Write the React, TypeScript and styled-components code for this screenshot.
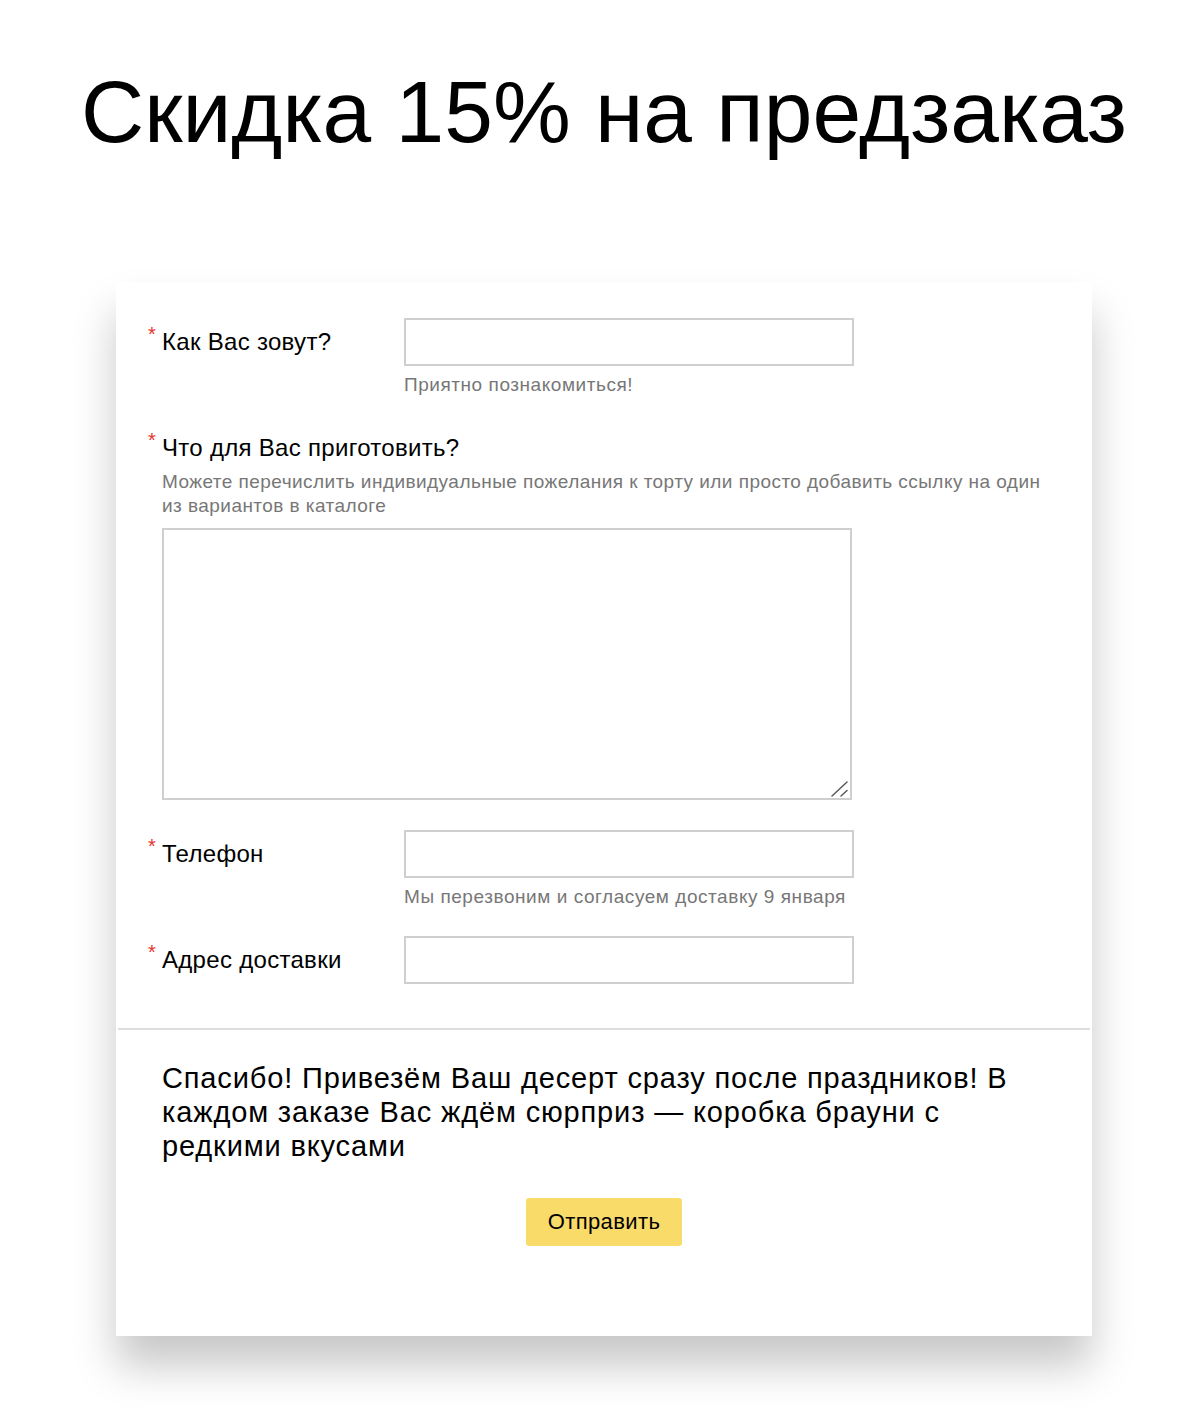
import styled, { createGlobalStyle } from 'styled-components';

const GlobalStyle = createGlobalStyle`
  body {
    margin: 0;
    background: #ffffff;
    font-family: 'Liberation Sans', Arial, sans-serif;
    color: #000000;
  }
`;

type FieldData = {
  label: string;
  hint?: string;
};

const inlineFieldsTop: FieldData[] = [
  { label: 'Как Вас зовут?', hint: 'Приятно познакомиться!' },
];

const inlineFieldsBottom: FieldData[] = [
  { label: 'Телефон', hint: 'Мы перезвоним и согласуем доставку 9 января' },
  { label: 'Адрес доставки' },
];

function InlineField({ label, hint }: FieldData) {
  return (
    <Row>
      <Label>
        <Star>*</Star>
        {label}
      </Label>
      <Control>
        <TextInput type="text" />
        {hint && <Hint>{hint}</Hint>}
      </Control>
    </Row>
  );
}

function App() {
  return (
    <Page>
      <GlobalStyle />
      <Title>Скидка 15% на предзаказ</Title>
      <Card>
        <Fields>
          {inlineFieldsTop.map((f) => (
            <InlineField key={f.label} {...f} />
          ))}
          <Block>
            <Label>
              <Star>*</Star>
              Что для Вас приготовить?
            </Label>
            <Description>
              Можете перечислить индивидуальные пожелания к торту или просто
              добавить ссылку на один из вариантов в каталоге
            </Description>
            <AreaWrap>
              <TextArea />
              <Resizer width="18" height="16" viewBox="0 0 18 16">
                <line x1="1" y1="15" x2="16" y2="1" />
                <line x1="10" y1="15" x2="16" y2="9.5" />
              </Resizer>
            </AreaWrap>
          </Block>
          {inlineFieldsBottom.map((f) => (
            <InlineField key={f.label} {...f} />
          ))}
        </Fields>
        <Divider />
        <Footer>
          <Thanks>
            Спасибо! Привезём Ваш десерт сразу после праздников! В каждом
            заказе Вас ждём сюрприз — коробка брауни с редкими вкусами
          </Thanks>
          <SubmitButton type="button">Отправить</SubmitButton>
        </Footer>
      </Card>
    </Page>
  );
}

export default App;

const Page = styled.div`
  width: 1202px;
  min-height: 1412px;
  box-sizing: border-box;
  padding: 62px 0 0 6px;
  display: flex;
  flex-direction: column;
  align-items: center;
`;

const Title = styled.h1`
  margin: 0 0 119px;
  font-size: 87.5px;
  line-height: 101px;
  font-weight: 400;
  white-space: nowrap;
`;

const Card = styled.div`
  width: 976px;
  background: #ffffff;
  box-shadow: 0 30px 40px rgba(0, 0, 0, 0.22);
  padding: 36px 0 90px;
  box-sizing: border-box;
  display: flex;
  flex-direction: column;
`;

const Fields = styled.div`
  padding: 0 36px 0 46px;
  display: flex;
  flex-direction: column;
  gap: 27px;
`;

const Row = styled.div`
  display: grid;
  grid-template-columns: 242px 450px;
  align-items: start;
`;

const Label = styled.div`
  font-size: 24px;
  letter-spacing: 0.3px;
  line-height: 48px;
  color: #000000;
  white-space: nowrap;
`;

const Star = styled.span`
  display: inline-block;
  width: 14px;
  margin-left: -14px;
  color: #e8332a;
  font-size: 20px;
  letter-spacing: 0;
  vertical-align: top;
  line-height: 32px;
`;

const Control = styled.div`
  display: flex;
  flex-direction: column;
`;

const TextInput = styled.input`
  width: 450px;
  height: 48px;
  box-sizing: border-box;
  border: 2px solid #cfcfcf;
  border-radius: 0;
  padding: 0 12px;
  font-family: inherit;
  font-size: 20px;
  outline: none;
  background: #ffffff;
`;

const Hint = styled.div`
  margin-top: 7px;
  font-size: 19px;
  letter-spacing: 0.55px;
  line-height: 24px;
  color: #777777;
  white-space: nowrap;
`;

const Block = styled.div`
  display: flex;
  flex-direction: column;
  margin-bottom: 3px;
`;

const Description = styled.div`
  margin-top: -2px;
  font-size: 19px;
  letter-spacing: 0.45px;
  line-height: 24px;
  color: #777777;
`;

const AreaWrap = styled.div`
  position: relative;
  margin-top: 10px;
  width: 690px;
  height: 272px;
`;

const TextArea = styled.textarea`
  display: block;
  width: 100%;
  height: 100%;
  box-sizing: border-box;
  border: 2px solid #cfcfcf;
  border-radius: 0;
  padding: 10px 12px;
  font-family: inherit;
  font-size: 20px;
  outline: none;
  resize: none;
`;

const Resizer = styled.svg`
  position: absolute;
  right: 3px;
  bottom: 3px;
  pointer-events: none;

  line {
    stroke: #5a5a5a;
    stroke-width: 1.5;
    stroke-linecap: round;
  }
`;

const Divider = styled.hr`
  margin: 44px 2px 0;
  border: none;
  height: 2px;
  background: #dddddd;
`;

const Footer = styled.div`
  padding: 31px 46px 0;
  display: flex;
  flex-direction: column;
  align-items: center;
`;

const Thanks = styled.p`
  margin: 0;
  align-self: stretch;
  font-size: 29px;
  letter-spacing: 0.85px;
  line-height: 34px;
  color: #000000;
`;

const SubmitButton = styled.button`
  margin-top: 35px;
  width: 156px;
  height: 48px;
  border: none;
  border-radius: 3px;
  background: #f9db6a;
  font-family: inherit;
  font-size: 22px;
  letter-spacing: 0.4px;
  color: #000000;
  cursor: pointer;
`;
